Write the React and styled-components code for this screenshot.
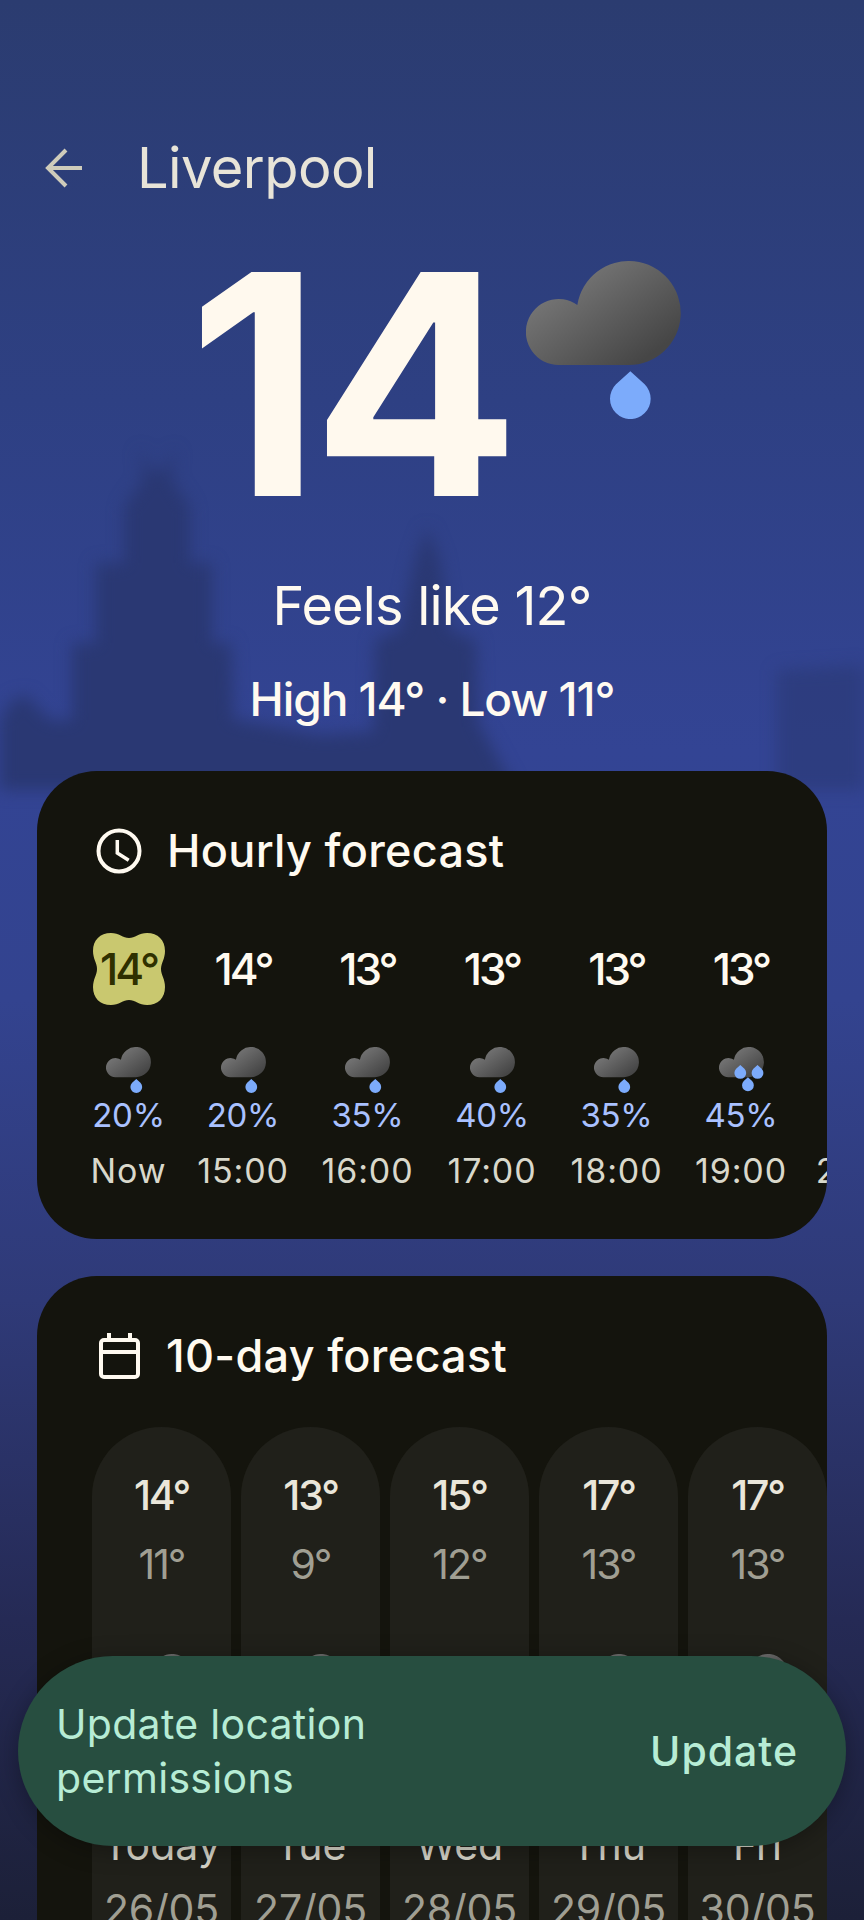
import React from "react";
import styled, { createGlobalStyle } from "styled-components";

const hours = [
  { temp: "14°", pct: "20%", time: "Now", width: 71, now: true },
  { temp: "14°", pct: "20%", time: "15:00", width: 91 },
  { temp: "13°", pct: "35%", time: "16:00", width: 91 },
  { temp: "13°", pct: "40%", time: "17:00", width: 91 },
  { temp: "13°", pct: "35%", time: "18:00", width: 91 },
  { temp: "13°", pct: "45%", time: "19:00", width: 91, heavy: true },
  { temp: "13°", pct: "45%", time: "20:00", width: 91 },
];

const days = [
  { high: "14°", low: "11°", day: "Today", date: "26/05", iconGap: 62 },
  { high: "13°", low: "9°", day: "Tue", date: "27/05", iconGap: 62 },
  { high: "15°", low: "12°", day: "Wed", date: "28/05", iconGap: 76 },
  { high: "17°", low: "13°", day: "Thu", date: "29/05", iconGap: 62 },
  { high: "17°", low: "13°", day: "Fri", date: "30/05", iconGap: 62 },
];

const GlobalStyle = createGlobalStyle`
  html, body {
    margin: 0;
    padding: 0;
    background: #1c2038;
  }
  * {
    box-sizing: border-box;
  }
`;

const Page = styled.div`
  position: relative;
  width: 864px;
  height: 1920px;
  overflow: hidden;
  padding-top: 148px;
  font-family: Inter, Roboto, "Liberation Sans", sans-serif;
  background: linear-gradient(
    180deg,
    #2b3c70 0,
    #2e4083 400px,
    #334494 750px,
    #33438f 1000px,
    #2f3a78 1300px,
    #252a55 1620px,
    #1c2038 1920px
  );
`;

const Skyline = styled.svg`
  position: absolute;
  top: 0;
  left: 0;
  filter: blur(8px);
`;

const Content = styled.div`
  position: relative;
`;

const TopBar = styled.div`
  display: flex;
  align-items: center;
  height: 40px;
  padding-left: 45px;
  gap: 52px;
`;

const City = styled.div`
  font-size: 56px;
  line-height: 40px;
  color: #e8e4d8;
  letter-spacing: -0.6px;
`;

const Hero = styled.div`
  display: flex;
  align-items: flex-start;
  height: 224px;
  margin-top: 84px;
  padding-left: 188px;
`;

const BigTemp = styled.div`
  font-size: 308px;
  line-height: 224px;
  font-weight: 700;
  letter-spacing: -9px;
  color: #fff9ee;
`;

const HeroIcon = styled.div`
  margin-top: -11px;
  margin-left: 15px;
  line-height: 0;
`;

const Feels = styled.div`
  margin-top: 80px;
  font-size: 54px;
  line-height: 60px;
  letter-spacing: -0.8px;
  text-align: center;
  color: #fffaf0;
`;

const HighLow = styled.div`
  margin-top: 33px;
  font-size: 46px;
  line-height: 60px;
  font-weight: 500;
  letter-spacing: -1.1px;
  text-align: center;
  color: #fffaf0;
`;

const Card = styled.section`
  margin: ${(p) => p.$top}px 37px 0;
  padding-top: 56px;
  background: #14140d;
  border-radius: 60px;
  overflow: hidden;
`;

const CardHead = styled.div`
  display: flex;
  align-items: center;
  height: 48px;
  padding-left: ${(p) => p.$left}px;
  gap: ${(p) => p.$gap}px;
`;

const CardTitle = styled.h2`
  margin: 0;
  font-size: 45px;
  line-height: 48px;
  font-weight: 500;
  letter-spacing: 0.3px;
  color: #fffaf0;
`;

const HourRow = styled.div`
  display: flex;
  gap: 33.5px;
  margin-top: 58px;
  padding: 0 0 43px 56px;
`;

const HourCol = styled.div`
  flex: none;
  display: flex;
  flex-direction: column;
  align-items: center;
  width: ${(p) => p.$width}px;
`;

const TempSlot = styled.div`
  position: relative;
  display: flex;
  align-items: center;
  justify-content: center;
  width: 72px;
  height: 72px;
  font-size: 44px;
  font-weight: 500;
  letter-spacing: -3px;
  color: ${(p) => (p.$now ? "#2f3000" : "#fffaf0")};
`;

const Blob = styled.svg`
  position: absolute;
  top: 0;
  left: 0;
`;

const TempText = styled.span`
  position: relative;
`;

const HourIcon = styled.div`
  height: 46px;
  margin-top: 42px;
  line-height: 0;
`;

const Pct = styled.div`
  height: 40px;
  margin-top: 2px;
  font-size: 33px;
  line-height: 40px;
  letter-spacing: -0.3px;
  color: #a9c1ff;
  white-space: nowrap;
`;

const Time = styled.div`
  margin-top: 11px;
  height: 50px;
  font-size: 34px;
  line-height: 50px;
  letter-spacing: 0.9px;
  color: #d9d8cb;
  white-space: nowrap;
`;

const DayRow = styled.div`
  display: flex;
  gap: 10px;
  margin-top: 47px;
  padding-left: 55px;
`;

const DayPill = styled.div`
  flex: none;
  display: flex;
  flex-direction: column;
  align-items: center;
  width: 139px;
  height: 640px;
  padding-top: 40px;
  background: #20201a;
  border-radius: 70px;
`;

const High = styled.div`
  font-size: 41px;
  line-height: 56px;
  font-weight: 500;
  letter-spacing: -2.2px;
  color: #eae6da;
`;

const Low = styled.div`
  margin-top: 13px;
  font-size: 41px;
  line-height: 56px;
  letter-spacing: -2px;
  color: #a09f93;
`;

const DayIcon = styled.div`
  height: ${(p) => 228 - p.$gap}px;
  margin-top: ${(p) => p.$gap}px;
  line-height: 0;
`;

const DayName = styled.div`
  font-size: 41px;
  line-height: 50px;
  color: #d6d4c8;
`;

const DayDate = styled.div`
  margin-top: 14px;
  font-size: 41px;
  line-height: 50px;
  letter-spacing: -0.2px;
  color: #a09f93;
`;

const Snackbar = styled.div`
  position: absolute;
  left: 18px;
  right: 18px;
  top: 1656px;
  height: 190px;
  display: flex;
  align-items: center;
  justify-content: space-between;
  padding: 0 48px 0 38px;
  background: #274e40;
  border-radius: 95px;
  box-shadow: 0 4px 24px rgba(0, 0, 0, 0.3);
  color: #b7ecd5;
`;

const SnackText = styled.div`
  font-size: 41px;
  line-height: 54px;
  letter-spacing: 0.3px;
  width: 360px;
`;

const SnackAction = styled.div`
  font-size: 41px;
  font-weight: 500;
  letter-spacing: 1px;
`;

const Drop = ({ x, y }) => (
  <path
    transform={`translate(${x - 313} ${y - 413})`}
    d="M313 331 L356 370 A61 61 0 1 1 270 370 Z"
    fill="#7cabfb"
  />
);

const RainIcon = ({ width, heavy }) => (
  <svg width={width} height={(width * 473) / 465} viewBox="0 0 465 473">
    <defs>
      <linearGradient id="cloudShade" x1="0.1" y1="0.15" x2="0.85" y2="0.85">
        <stop offset="0" stopColor="#7c7c7c" />
        <stop offset="1" stopColor="#464646" />
      </linearGradient>
    </defs>
    <path
      d="M98 312 A98 99 0 1 1 154 132 A156 156 0 1 1 307 312 Z"
      fill="url(#cloudShade)"
    />
    {heavy ? (
      <>
        <Drop x={220} y={268} />
        <Drop x={398} y={268} />
        <Drop x={299} y={395} />
      </>
    ) : (
      <Drop x={313} y={413} />
    )}
  </svg>
);

const BackArrow = () => (
  <svg width="40" height="40" viewBox="0 0 40 40" fill="none" stroke="#cfccbb" strokeWidth="4">
    <path d="M37 20H3M21 2L3 20L21 38" />
  </svg>
);

const ClockIcon = () => (
  <svg width="48" height="48" viewBox="0 0 48 48" fill="none" stroke="#fffaf0" strokeWidth="4">
    <circle cx="24" cy="24" r="20.5" />
    <path d="M22.3 13V26L33.7 33.3" strokeWidth="3.5" />
  </svg>
);

const CalendarIcon = () => (
  <svg width="41" height="46" viewBox="0 0 41 46" fill="none" stroke="#fffaf0" strokeWidth="4">
    <rect x="2" y="7" width="37" height="37" rx="3" />
    <path d="M2 19H39M10 0V7M31 0V7" />
  </svg>
);

export default function App() {
  return (
    <Page>
      <GlobalStyle />
      <Skyline width="864" height="1920" viewBox="0 0 864 1920" fill="#2a3873">
        <polygon points="140,447 150,470 165,470 175,447 172,480 190,507 190,563 212,563 212,643 231,643 236,790 72,790 72,643 96,643 96,563 124,563 124,507 143,480" />
        <polygon points="427,527 440,560 450,630 476,640 480,790 372,790 375,640 400,630 415,560" />
        <polygon points="0,720 12,700 26,695 50,720 240,720 320,735 480,725 515,790 0,790" />
        <polygon points="777,670 864,665 864,790 777,790" fillOpacity="0.6" />
      </Skyline>
      <Content>
        <TopBar>
          <BackArrow />
          <City>Liverpool</City>
        </TopBar>
        <Hero>
          <BigTemp>14</BigTemp>
          <HeroIcon>
            <RainIcon width={155} />
          </HeroIcon>
        </Hero>
        <Feels>Feels like 12°</Feels>
        <HighLow>High 14° · Low 11°</HighLow>

        <Card $top={42}>
          <CardHead $left={58} $gap={24}>
            <ClockIcon />
            <CardTitle>Hourly forecast</CardTitle>
          </CardHead>
          <HourRow>
            {hours.map((h) => (
              <HourCol key={h.time} $width={h.width}>
                <TempSlot $now={h.now}>
                  {h.now && (
                    <Blob width="72" height="72" viewBox="0 0 72 72">
                      <path
                        d="M36 5C30 5 26 0 18 0C7 0 0 7 0 18C0 26 4 30 4 36C4 42 0 46 0 54C0 65 7 72 18 72C26 72 30 67 36 67C42 67 46 72 54 72C65 72 72 65 72 54C72 46 68 42 68 36C68 30 72 26 72 18C72 7 65 0 54 0C46 0 42 5 36 5Z"
                        fill="#c9c86f"
                      />
                    </Blob>
                  )}
                  <TempText>{h.temp}</TempText>
                </TempSlot>
                <HourIcon>
                  <RainIcon width={45} heavy={h.heavy} />
                </HourIcon>
                <Pct>{h.pct}</Pct>
                <Time>{h.time}</Time>
              </HourCol>
            ))}
          </HourRow>
        </Card>

        <Card $top={37}>
          <CardHead $left={62} $gap={26}>
            <CalendarIcon />
            <CardTitle>10-day forecast</CardTitle>
          </CardHead>
          <DayRow>
            {days.map((d) => (
              <DayPill key={d.date}>
                <High>{d.high}</High>
                <Low>{d.low}</Low>
                <DayIcon $gap={d.iconGap}>
                  <RainIcon width={60} />
                </DayIcon>
                <DayName>{d.day}</DayName>
                <DayDate>{d.date}</DayDate>
              </DayPill>
            ))}
          </DayRow>
        </Card>
      </Content>
      <Snackbar>
        <SnackText>Update location permissions</SnackText>
        <SnackAction>Update</SnackAction>
      </Snackbar>
    </Page>
  );
}
